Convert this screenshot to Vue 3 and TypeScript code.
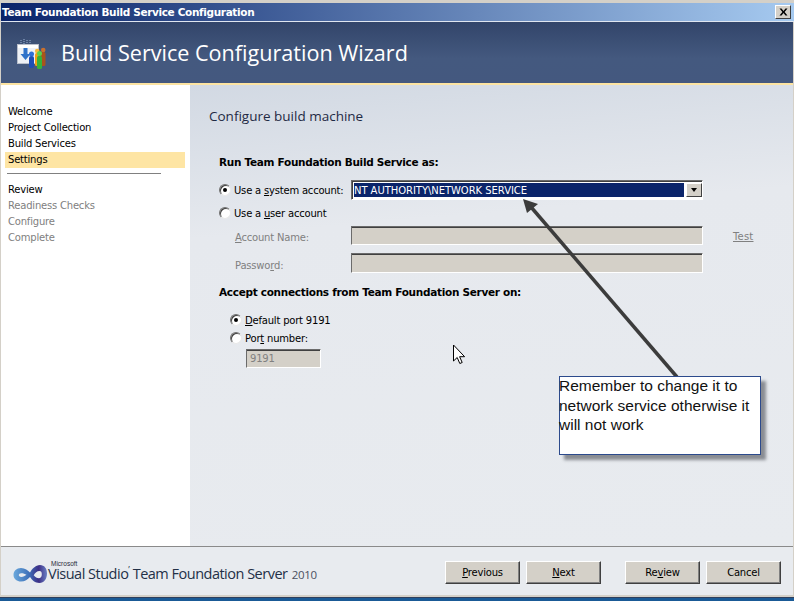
<script setup lang="ts">
const navTop: { label: string; active?: boolean }[] = [
  { label: 'Welcome' },
  { label: 'Project Collection' },
  { label: 'Build Services' },
  { label: 'Settings', active: true },
]
const navBottom: { label: string; muted?: boolean }[] = [
  { label: 'Review' },
  { label: 'Readiness Checks', muted: true },
  { label: 'Configure', muted: true },
  { label: 'Complete', muted: true },
]
</script>

<template>
  <div class="window">
    <div class="titlebar">
      <span class="title-text">Team Foundation Build Service Configuration</span>
      <button class="close" aria-label="Close">
        <svg width="9" height="8" viewBox="0 0 9 8"><path d="M0.5 0.5h2l2 2.4 2-2.4h2L5.6 4l2.9 3.5h-2l-2-2.4-2 2.4h-2L3.4 4z" fill="#000" /></svg>
      </button>
    </div>
    <div class="header">
      <svg class="wizard-icon" width="31" height="30" viewBox="0 0 31 30">
        <path d="M4 1v4M7 0v5M10 1v4M13 1v4" stroke="#9db4d6" stroke-width="1" stroke-dasharray="1 1" />
        <rect x="0.500" y="5.500" width="21" height="19" fill="#eef1f6" stroke="#b9bfcb" />
        <rect x="1" y="6" width="20" height="3" fill="#fff" />
        <path d="M6.500 9h4v6h3l-5 6-5-6h3z" fill="#2f72c9" />
        <rect x="24" y="13" width="4.500" height="14" rx="1.500" fill="#a8541c" />
        <circle cx="26.200" cy="11" r="2.300" fill="#c9702d" />
        <rect x="18" y="14" width="4.500" height="13" rx="1.500" fill="#f2a017" />
        <circle cx="20.200" cy="12" r="2.300" fill="#f7b73c" />
        <rect x="12" y="17" width="5" height="12" rx="2" fill="#1f4fb4" />
        <circle cx="14.500" cy="15" r="2.500" fill="#2f6fd6" />
        <rect x="20" y="17" width="5" height="13" rx="1.500" fill="#35b239" />
        <circle cx="22.500" cy="14.500" r="2.500" fill="#5ccf4c" />
      </svg>
      <h1 class="wizard-title">Build Service Configuration Wizard</h1>
    </div>
    <div class="accent"></div>
    <div class="body">
      <aside class="sidebar">
        <ul class="nav">
          <li v-for="n in navTop" :key="n.label" :class="{ active: n.active }">{{ n.label }}</li>
        </ul>
        <div class="nav-sep"></div>
        <ul class="nav">
          <li v-for="n in navBottom" :key="n.label" :class="{ muted: n.muted }">{{ n.label }}</li>
        </ul>
      </aside>
      <main class="main">
        <h2 class="page-title">Configure build machine</h2>
        <section class="form">
          <h3 class="group-title">Run Team Foundation Build Service as:</h3>
          <div class="row row-system">
            <span class="radio checked"></span>
            <span class="radio-label system-label">Use a <u>s</u>ystem account:</span>
            <div class="combo">
              <span class="combo-value">NT AUTHORITY\NETWORK SERVICE</span>
              <span class="combo-btn"><i class="caret"></i></span>
            </div>
          </div>
          <div class="row row-user">
            <span class="radio"></span>
            <span class="radio-label">Use a <u>u</u>ser account</span>
          </div>
          <div class="field field-account">
            <label class="field-label"><u>A</u>ccount Name:</label>
            <div class="sunken wide"></div>
            <a class="test">Test</a>
          </div>
          <div class="field field-password">
            <label class="field-label">Passwo<u>r</u>d:</label>
            <div class="sunken wide"></div>
          </div>
          <h3 class="group-title second">Accept connections from Team Foundation Server on:</h3>
          <div class="row row-port indent">
            <span class="radio checked"></span>
            <span class="radio-label"><u>D</u>efault port 9191</span>
          </div>
          <div class="row row-portnum indent">
            <span class="radio"></span>
            <span class="radio-label">Por<u>t</u> number:</span>
          </div>
          <div class="sunken port-input">9191</div>
        </section>
      </main>
    </div>
    <footer class="footer">
      <div class="brand">
        <svg width="35" height="20" viewBox="0 0 35 20" class="brand-mark">
          <defs>
            <linearGradient id="loopA" x1="0" y1="0" x2="1" y2="0">
              <stop offset="0" stop-color="#6aa8dc" />
              <stop offset="0.45" stop-color="#3f72ba" />
              <stop offset="0.75" stop-color="#3d2f86" />
              <stop offset="1" stop-color="#6a80c4" />
            </linearGradient>
          </defs>
          <path fill-rule="evenodd" d="M8 4c4 0 7 2.500 9 4.500C19 5 22.500 1 27 1c4.500 0 7 3.500 7 8.500 0 5.500-3 9.500-7.500 9.500-4.500 0-7.500-3-9.500-6-2.500 2.500-5 4.500-9 4.500-4 0-7.500-2.500-7.500-6.500S3.500 4 8 4zM8.200 9.200c-1.500 0-2.400.8-2.400 1.900s.9 1.900 2.400 1.900c2.200 0 3.800-1 5.300-2.200-1.500-.9-3.200-1.600-5.300-1.600zM26.500 7c-2.500 0-4.300 2-5.800 4.200 1.500 1.700 3.300 3 5.300 3 2 0 2.800-1.700 2.800-3.900S28.100 7 26.500 7z" fill="url(#loopA)" />
        </svg>
        <div class="brand-text">
          <span class="brand-ms">Microsoft</span>
          <span class="brand-name">Visual Studio<sup class="tm">&#8217;</sup> Team Foundation Server <small>2010</small></span>
        </div>
      </div>
      <div class="buttons">
        <button class="btn"><u>P</u>revious</button>
        <button class="btn"><u>N</u>ext</button>
        <button class="btn spaced">Re<u>v</u>iew</button>
        <button class="btn">Cancel</button>
      </div>
    </footer>
    <div class="window-bottom"></div>

    <svg class="arrow" width="794" height="601" viewBox="0 0 794 601">
      <line x1="677" y1="377" x2="531" y2="207" stroke="#3c3c3c" stroke-width="3.500" />
      <path d="M523 199L538 204L527 213z" fill="#3c3c3c" />
    </svg>
    <div class="callout"><p class="callout-text">Remember to change it to network service otherwise it will not work</p></div>
    <svg class="cursor" width="14" height="22" viewBox="0 0 14 22">
      <path d="M1.500 1v16l3.700-3.500 2.600 6 2.400-1-2.600-5.800h5z" fill="#fff" stroke="#000" stroke-width="1" />
    </svg>
  </div>
</template>

<style>
html, body { margin: 0; padding: 0; }
</style>

<style scoped>
.window {
  position: relative;
  width: 794px;
  height: 601px;
  overflow: hidden;
  background: #d4d0c8;
  display: flex;
  flex-direction: column;
  padding: 3px 1px 0 1px;
  box-sizing: border-box;
  font-family: "DejaVu Sans", sans-serif;
  font-size: 10px;
  letter-spacing: -0.200px;
  color: #000;
}
.titlebar {
  height: 18px;
  flex: none;
  margin: 0 -1px 0 0;
  padding: 0 2px 0 1px;
  background: linear-gradient(90deg, #0a246a 0%, #a6caf0 100%);
  display: flex;
  align-items: center;
  justify-content: space-between;
  border-bottom: 1px solid #dfe6f0;
}
.title-text {
  color: #fff;
  font-weight: 700;
  font-size: 10.500px;
  letter-spacing: -0.350px;
}
.close {
  width: 16px;
  height: 14px;
  padding: 0;
  margin-right: 1px;
  background: #d4d0c8;
  border: 1px solid;
  border-color: #fff #404040 #404040 #fff;
  display: flex;
  align-items: center;
  justify-content: center;
  box-sizing: border-box;
}
.header {
  height: 61px;
  flex: none;
  background: linear-gradient(180deg, #32456a 0%, #44597f 60%, #44587f 100%);
  display: flex;
  align-items: center;
  padding-left: 16px;
  box-sizing: border-box;
}
.wizard-icon { flex: none; margin-right: 13px; margin-top: 2px; }
.wizard-title {
  margin: 0;
  font-family: "Open Sans", sans-serif;
  font-weight: 400;
  font-size: 21.600px;
  letter-spacing: 0;
  color: #fff;
  white-space: nowrap;
}
.accent { height: 2px; flex: none; background: #fde4a2; }
.body { flex: 1; display: flex; min-height: 0; }
.sidebar {
  width: 189px;
  flex: none;
  background: #fff;
  padding-top: 19px;
  box-sizing: border-box;
}
.nav { list-style: none; margin: 0; padding: 0 5px 0 4px; }
.nav li {
  height: 16px;
  line-height: 16px;
  padding-left: 3px;
  white-space: nowrap;
}
.nav li.active { background: #fee5a4; }
.nav li.muted { color: #808080; }
.nav-sep { height: 1px; margin: 5px 0 8px 6px; width: 154px; background: #808080; }
.main {
  flex: 1;
  background: linear-gradient(175deg, #d2d9e3 0%, #e6e9ee 30%, #e8ebef 100%);
  padding: 22px 0 0 19px;
  box-sizing: border-box;
  min-width: 0;
}
.page-title {
  margin: 0;
  font-family: "Open Sans", sans-serif;
  font-weight: 400;
  font-size: 13.500px;
  letter-spacing: 0;
  line-height: 19px;
  color: #1f2a44;
}
.form { margin: 28px 0 0 10px; width: 560px; }
.group-title {
  margin: 0;
  height: 16px;
  line-height: 16px;
  font-weight: 700;
  font-size: 10.500px;
  letter-spacing: -0.300px;
  color: #000;
  white-space: nowrap;
}
.group-title.second { margin-top: 11px; }
.row { display: flex; align-items: center; height: 20px; }
.row-system { margin-top: 10px; }
.row-user { margin-top: 3px; height: 20px; }
.row-port { margin-top: 11px; height: 18px; }
.row-portnum { height: 18px; }
.indent { padding-left: 11px; }
.radio {
  width: 12px;
  height: 12px;
  border-radius: 50%;
  background: #fff;
  border: 1px solid;
  border-color: #707070 #e8e8e8 #e8e8e8 #707070;
  box-shadow: inset 1px 1px 0 #404040;
  box-sizing: border-box;
  flex: none;
  position: relative;
  margin-right: 3px;
}
.radio.checked::after {
  content: "";
  position: absolute;
  left: 3px;
  top: 3px;
  width: 4px;
  height: 4px;
  border-radius: 50%;
  background: #000;
}
.radio-label { white-space: nowrap; }
.system-label { width: 117px; flex: none; }
.combo {
  width: 352px;
  height: 20px;
  flex: none;
  box-sizing: border-box;
  background: #fff;
  border: 1px solid;
  border-color: #6b6b6b #fff #fff #6b6b6b;
  box-shadow: inset 1px 1px 0 #404040;
  padding: 2px 0 2px 2px;
  display: flex;
}
.combo-value {
  flex: 1;
  background: #0a246a;
  color: #fff;
  line-height: 15px;
  letter-spacing: -0.050px;
  white-space: nowrap;
  overflow: hidden;
}
.combo-btn {
  width: 16px;
  background: #d4d0c8;
  margin-left: 2px;
  border: 1px solid;
  border-color: #fff #404040 #404040 #fff;
  box-sizing: border-box;
  display: flex;
  align-items: center;
  justify-content: center;
}
.caret {
  width: 0;
  height: 0;
  border-left: 3.500px solid transparent;
  border-right: 3.500px solid transparent;
  border-top: 4px solid #000;
}
.field { display: flex; align-items: center; color: #808080; }
.field-account { margin-top: 3px; height: 19px; }
.field-password { margin-top: 8px; height: 20px; }
.field-label { width: 132px; padding: 4px 0 0 16px; box-sizing: border-box; flex: none; white-space: nowrap; }
.sunken {
  background: #d4d0c8;
  border: 1px solid;
  border-color: #6b6b6b #fff #fff #6b6b6b;
  box-shadow: inset 0 1px 0 #404040;
  box-sizing: border-box;
}
.wide { width: 352px; height: 100%; flex: none; }
.test { margin: 2px 0 0 30px; text-decoration: underline; color: #808080; letter-spacing: 0.200px; }
.port-input {
  margin: 2px 0 0 27px;
  width: 75px;
  height: 19px;
  line-height: 17px;
  padding-left: 3px;
  color: #808080;
}
.footer {
  height: 49px;
  flex: none;
  background: #e8ebef;
  border-top: 1px solid #8a8a8a;
  box-sizing: border-box;
  display: flex;
  align-items: center;
  justify-content: space-between;
  padding: 0 12px 0 12px;
}
.brand { display: flex; align-items: flex-end; margin-top: 1px; }
.brand-mark { flex: none; }
.brand-text { position: relative; padding-top: 5px; }
.brand-ms {
  position: absolute;
  left: 3px;
  top: 0;
  font-family: "Liberation Sans", sans-serif;
  font-size: 6.500px;
  letter-spacing: 0;
  line-height: 7px;
  color: #2a2a3a;
}
.brand-name {
  font-family: "Open Sans", sans-serif;
  font-size: 14.500px;
  line-height: 18px;
  letter-spacing: -0.500px;
  color: #233047;
  white-space: nowrap;
}
.brand-name small { font-size: 11.500px; color: #4a5060; margin-left: 1px; letter-spacing: -0.300px; }
.tm { font-size: 9px; line-height: 0; }
.buttons { display: flex; gap: 6px; margin-top: 2px; }
.btn {
  width: 75px;
  height: 23px;
  padding: 0;
  background: #d4d0c8;
  border: 1px solid;
  border-color: #fff #404040 #404040 #fff;
  box-shadow: inset -1px -1px 0 #808080;
  font-family: inherit;
  font-size: inherit;
  letter-spacing: inherit;
  color: #000;
  box-sizing: border-box;
}
.btn.spaced { margin-left: 18px; }
.window-bottom {
  height: 6px;
  flex: none;
  margin: 0 -1px;
  background: linear-gradient(180deg, #d4d0c8 0 2px, #2f3f5c 2px 3px, #1a5a96 3px);
}
.arrow { position: absolute; left: 0; top: 0; pointer-events: none; }
.callout {
  position: absolute;
  left: 559px;
  top: 376px;
  width: 202px;
  height: 79px;
  box-sizing: border-box;
  background: #fff;
  border: 1px solid #2c4a8c;
  box-shadow: 5px 5px 3px #8a8d93;
  font-family: "Liberation Sans", sans-serif;
  font-size: 15.500px;
  letter-spacing: 0;
  line-height: 19.500px;
  color: #111;
}
.callout-text { margin: -1px 0 0 -1px; }
.cursor { position: absolute; left: 452px; top: 344px; }
</style>
